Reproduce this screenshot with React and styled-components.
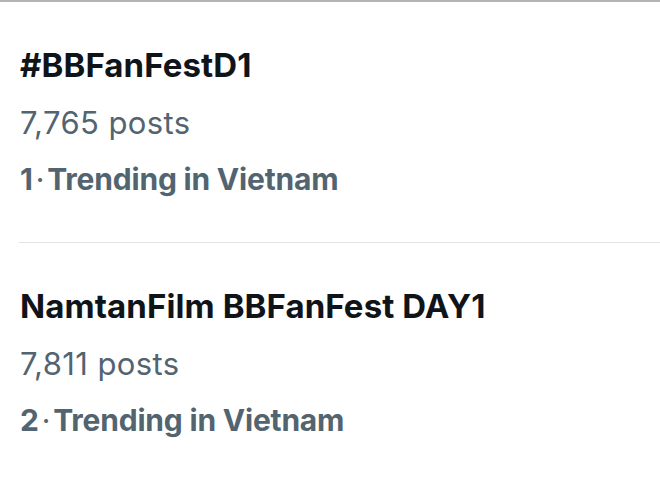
import styled, { createGlobalStyle } from "styled-components";

const GlobalStyle = createGlobalStyle`
  html, body {
    margin: 0;
    padding: 0;
    background: #ffffff;
  }
  body {
    font-family: Inter, "Noto Sans", "DejaVu Sans", sans-serif;
    -webkit-font-smoothing: antialiased;
  }
`;

const trends = [
  { rank: 1, name: "#BBFanFestD1", posts: "7,765", place: "Vietnam" },
  { rank: 2, name: "NamtanFilm BBFanFest DAY1", posts: "7,811", place: "Vietnam" },
];

export default function App() {
  return (
    <>
      <GlobalStyle />
      <Page>
        {trends.map((t, i) => (
          <TrendItem key={t.rank} $first={i === 0}>
            <Title>{t.name}</Title>
            <Posts>{t.posts} posts</Posts>
            <Context>
              {t.rank}
              <Dot>·</Dot>
              Trending in {t.place}
            </Context>
          </TrendItem>
        ))}
      </Page>
    </>
  );
}

const Page = styled.div`
  width: 660px;
  height: 482px;
  border-top: 2px solid #b4b4b4;
  box-sizing: border-box;
  overflow: hidden;
`;

const TrendItem = styled.div`
  display: flex;
  flex-direction: column;
  margin-left: 19px;
  padding-left: 1px;
  height: 240px;
  box-sizing: border-box;
  padding-top: ${(p) => (p.$first ? "35px" : "35px")};
  border-top: ${(p) => (p.$first ? "none" : "1px solid #e3e3e3")};
`;

const Row = styled.div`
  line-height: 57px;
  height: 57px;
  white-space: nowrap;
`;

const Title = styled(Row)`
  font-size: 33px;
  font-weight: 700;
  color: #0f1419;
  letter-spacing: 0.1px;
`;

const Posts = styled(Row)`
  font-size: 31px;
  font-weight: 400;
  color: #536471;
  letter-spacing: 0.4px;
`;

const Context = styled(Row)`
  font-size: 30px;
  font-weight: 700;
  color: #536471;
  letter-spacing: -0.2px;
`;

const Dot = styled.span`
  font-weight: 400;
  margin: 0 3px;
`;
